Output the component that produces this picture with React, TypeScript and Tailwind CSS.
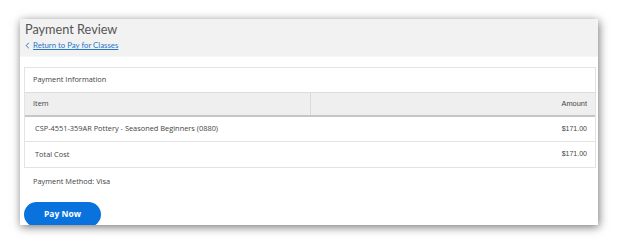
export default function App() {
  const rows = [
    { item: "CSP-4551-359AR Pottery - Seasoned Beginners (0880)", amount: "$171.00" },
    { item: "Total Cost", amount: "$171.00" },
  ];

  return (
    <div className="h-[245px] w-[618px] bg-white pl-[20px] pt-[19px]">
      <div className="flex h-[206px] w-[578px] flex-col overflow-hidden bg-white shadow-[1px_2px_9px_rgba(0,0,0,0.55)] [font-family:'Open_Sans',sans-serif]">
        {/* Header */}
        <div className="h-[38px] shrink-0 border-b border-[#f7f7f7] bg-[#f2f2f2] pl-[5px] pt-[1px]">
          <h1 className="text-[12.7px] leading-[18px] text-[#555] [font-family:Lato,sans-serif]">Payment Review</h1>
          <a className="mt-[1px] flex items-center gap-[3px] text-[7.8px] leading-[12px] text-[#2576c9] [font-family:Lato,sans-serif]">
            <svg width="5" height="7" viewBox="0 0 5 7">
              <path d="M3.8 0.8 L1.1 3.5 L3.8 6.2" fill="none" stroke="#2576c9" strokeWidth="1" />
            </svg>
            <span className="underline">Return to Pay for Classes</span>
          </a>
        </div>

        <div className="flex flex-col pl-[4px] pr-[2px] pt-[10px]">
          {/* Payment information panel */}
          <div className="border border-[#e3e3e3] text-[7.4px] text-[#444]">
            <div className="flex h-[24px] items-center pl-[8px]">Payment Information</div>
            <div className="flex h-[25px] border-t border-b-2 border-t-[#dcdcdc] border-b-[#c6c6c6] bg-[#efefef]">
              <div className="flex w-[286px] items-center border-r border-[#dadada] pl-[8px]">Item</div>
              <div className="flex flex-1 items-center justify-end pr-[8px] [font-family:'Liberation_Sans',sans-serif]">Amount</div>
            </div>
            {rows.map((r, i) => (
              <div
                key={i}
                className={`flex h-[25px] items-center justify-between pl-[10px] pr-[8px] ${i === 0 ? "border-b border-[#e3e3e3]" : ""}`}
              >
                <span>{r.item}</span>
                <span className="text-[7px] [font-family:'Liberation_Sans',sans-serif]">{r.amount}</span>
              </div>
            ))}
          </div>

          <p className="mt-[7px] pl-[9px] text-[7.4px] leading-[12px] text-[#444]">Payment Method: Visa</p>

          <button className="mt-[15px] flex h-[25px] w-[77px] items-center justify-center rounded-full bg-[#0a72dc] text-[8.5px] font-bold text-white">
            Pay Now
          </button>
        </div>
      </div>
    </div>
  );
}
